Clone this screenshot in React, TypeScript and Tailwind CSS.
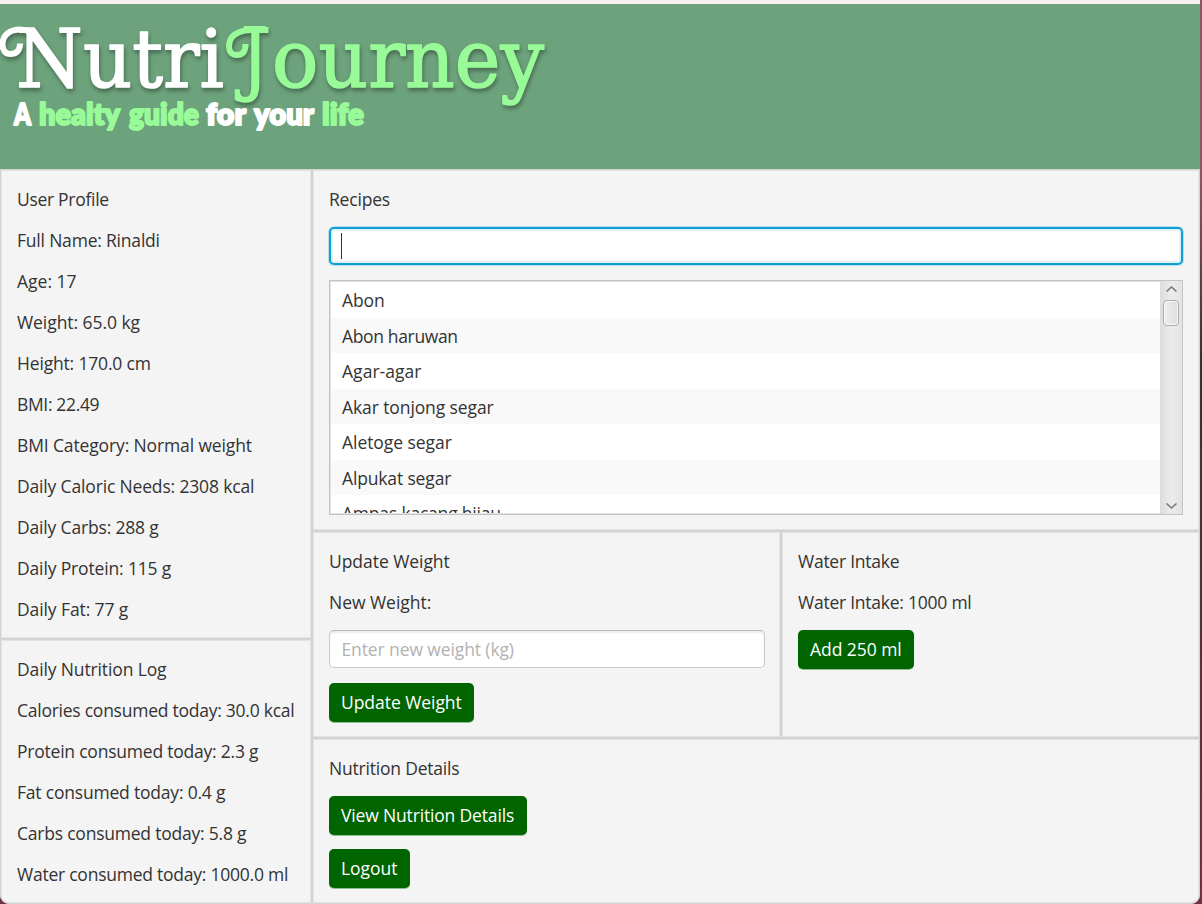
import type { ReactNode } from "react";

type Line = [text: string, tracking: string];

const profile: Line[] = [
  ["User Profile", "tracking-[-0.3px]"],
  ["Full Name: Rinaldi", "tracking-[-0.2px]"],
  ["Age: 17", "tracking-[0px]"],
  ["Weight: 65.0 kg", "tracking-[-0.06px]"],
  ["Height: 170.0 cm", "tracking-[-0.17px]"],
  ["BMI: 22.49", "tracking-[-0.35px]"],
  ["BMI Category: Normal weight", "tracking-[-0.13px]"],
  ["Daily Caloric Needs: 2308 kcal", "tracking-[-0.16px]"],
  ["Daily Carbs: 288 g", "tracking-[-0.17px]"],
  ["Daily Protein: 115 g", "tracking-[-0.15px]"],
  ["Daily Fat: 77 g", "tracking-[-0.1px]"],
];

const log: Line[] = [
  ["Daily Nutrition Log", "tracking-[-0.13px]"],
  ["Calories consumed today: 30.0 kcal", "tracking-[-0.25px]"],
  ["Protein consumed today: 2.3 g", "tracking-[-0.22px]"],
  ["Fat consumed today: 0.4 g", "tracking-[-0.2px]"],
  ["Carbs consumed today: 5.8 g", "tracking-[-0.22px]"],
  ["Water consumed today: 1000.0 ml", "tracking-[-0.24px]"],
];

const recipes: Line[] = [
  ["Abon", "tracking-[-0.1px]"],
  ["Abon haruwan", "tracking-[-0.35px]"],
  ["Agar-agar", "tracking-[0.03px]"],
  ["Akar tonjong segar", "tracking-[-0.1px]"],
  ["Aletoge segar", "tracking-[-0.05px]"],
  ["Alpukat segar", "tracking-[-0.15px]"],
  ["Ampas kacang hijau", "tracking-[-0.2px]"],
];

function Panel({ className, children }: { className: string; children: ReactNode }) {
  return (
    <section
      className={`flex flex-col items-start gap-[15px] border border-[#d3d3d3] px-4 pt-4 shadow-[inset_0_0_0_1px_#e4e4e4] ${className}`}
    >
      {children}
    </section>
  );
}

function Label({ line: [text, tracking] }: { line: Line }) {
  return <div className={`h-[26px] shrink-0 leading-[26px] whitespace-nowrap ${tracking}`}>{text}</div>;
}

function Button({ line: [text, tracking], className }: { line: Line; className: string }) {
  return (
    <button
      className={`h-[39px] shrink-0 rounded-[5px] bg-[#006400] pl-3 text-left leading-[39px] whitespace-nowrap text-white shadow-[0_1px_0_#93bd93] ${tracking} ${className}`}
    >
      {text}
    </button>
  );
}

function Logo() {
  return (
    <svg width="560" height="150" viewBox="0 0 560 150" className="block">
      <g
        className="[filter:drop-shadow(1px_3px_2px_rgba(0,0,0,0.35))]"
        fontFamily="'DejaVu Serif', serif"
        fontSize="81"
        strokeLinejoin="round"
      >
        <g fill="#fff" stroke="#fff" strokeWidth="1.600">
          <text x="16" y="82.500" textLength="208" lengthAdjust="spacingAndGlyphs">Nutri</text>
          <path d="M20 39.500C20 47 16 50 10.500 50C5 50 2.500 46 2.500 40.500C2.500 31 10 25.500 20 25.500C28 25.500 32 28 37 35" fill="none" strokeWidth="6" />
        </g>
        <g fill="#98fb98" stroke="#98fb98" strokeWidth="1.600">
          <text x="241" y="81" textLength="27" lengthAdjust="spacingAndGlyphs">J</text>
          <path d="M245.500 40C245.500 48 242 51 237 51C231 51 229 47 229 42.500C229 31 238 26.500 252 26H268.500" fill="none" strokeWidth="6" />
          <text x="272" y="82.500" textLength="272" lengthAdjust="spacingAndGlyphs">ourney</text>
        </g>
      </g>
      <g
        fontFamily="Lato, sans-serif"
        fontWeight="800"
        fontSize="31"
        strokeWidth="1.800"
        strokeLinejoin="round"
      >
        <g fill="#fff" stroke="#fff">
          <text x="14" y="121" textLength="17" lengthAdjust="spacingAndGlyphs">A</text>
          <text x="206" y="121" textLength="40" lengthAdjust="spacingAndGlyphs">for</text>
          <text x="254" y="121" textLength="60" lengthAdjust="spacingAndGlyphs">your</text>
        </g>
        <g fill="#98fb98" stroke="#98fb98">
          <text x="39" y="121" textLength="81" lengthAdjust="spacingAndGlyphs">healty</text>
          <text x="129" y="121" textLength="70" lengthAdjust="spacingAndGlyphs">guide</text>
          <text x="322" y="121" textLength="42" lengthAdjust="spacingAndGlyphs">life</text>
        </g>
      </g>
    </svg>
  );
}

function Scrollbar() {
  return (
    <div className="flex w-[22px] shrink-0 flex-col items-center justify-between bg-linear-to-r from-[#dcdcdc] via-[#ebebeb] to-[#e3e3e3]">
      <div className="flex flex-col items-center">
        <svg width="13" height="8" viewBox="0 0 13 8" className="mt-1">
          <path d="M1.500 6.500L6.500 2L11.500 6.500" fill="none" stroke="#777" strokeWidth="1.600" />
        </svg>
        <div className="mt-[7px] h-[26px] w-4 rounded-[4px] border border-[#adadad] bg-linear-to-r from-[#eeeeee] to-[#dedede] shadow-[inset_0_0_0_1px_#f8f8f8]" />
      </div>
      <svg width="13" height="8" viewBox="0 0 13 8" className="mb-1">
        <path d="M1.500 1.500L6.500 6L11.500 1.500" fill="none" stroke="#777" strokeWidth="1.600" />
      </svg>
    </div>
  );
}

export default function App() {
  return (
    <div className="flex h-[904px] w-[1202px] bg-linear-to-b from-[#8a5565] from-20% via-[#343232] via-40% to-[#6b3245] font-['Open_Sans','Noto_Sans',sans-serif] text-[17.5px] text-[#333]">
      <div className="flex w-[1200px] flex-col overflow-hidden rounded-b-[9px] bg-[#f4f4f4]">
        <div className="h-1 shrink-0 bg-[#f8f0ee]" />
        <header className="h-[165px] shrink-0 bg-[#6da37c]">
          <Logo />
        </header>
        <main className="flex min-h-0 flex-1">
          <div className="flex w-[312px] shrink-0 flex-col">
            <Panel className="h-[470px]">
              {profile.map((l) => (
                <Label key={l[0]} line={l} />
              ))}
            </Panel>
            <Panel className="h-[265px] rounded-bl-[9px]">
              {log.map((l) => (
                <Label key={l[0]} line={l} />
              ))}
            </Panel>
          </div>
          <div className="flex flex-1 flex-col">
            <Panel className="h-[362px]">
              <Label line={["Recipes", "tracking-[-0.2px]"]} />
              <div className="flex h-[38px] w-[854px] shrink-0 items-center rounded-[5px] border-2 border-[#0f9fd4] bg-white pl-[9.5px] shadow-[0_0_0_1px_#b5e0ee,inset_0_0_0_2px_#dff1f9]">
                <div className="h-[26px] w-[1.5px] bg-[#333]" />
              </div>
              <div className="flex h-[235px] w-[854px] shrink-0 border border-[#c4c4c4] bg-white shadow-[inset_0_0_0_1px_#e2e2e2]">
                <ul className="my-px ml-px flex-1 overflow-hidden">
                  {recipes.map(([text, tracking]) => (
                    <li
                      key={text}
                      className={`h-[35.5px] pl-[11px] leading-[37px] whitespace-nowrap even:bg-[#f9f9f9] ${tracking}`}
                    >
                      {text}
                    </li>
                  ))}
                </ul>
                <Scrollbar />
              </div>
            </Panel>
            <div className="flex h-[207px]">
              <Panel className="w-[469px]">
                <Label line={["Update Weight", "tracking-[-0.05px]"]} />
                <Label line={["New Weight:", "tracking-[-0.03px]"]} />
                <input
                  placeholder="Enter new weight (kg)"
                  className="h-[38px] w-[436px] shrink-0 rounded-[5px] border border-[#c8c8c8] border-t-[#b8b8b8] bg-white px-[11.5px] tracking-[-0.11px] shadow-[inset_0_2px_2px_#ececec] outline-none placeholder:text-[#b2b2b2]"
                />
                <Button line={["Update Weight", "tracking-[-0.05px]"]} className="w-[145px]" />
              </Panel>
              <Panel className="flex-1">
                <Label line={["Water Intake", "tracking-[-0.25px]"]} />
                <Label line={["Water Intake: 1000 ml", "tracking-[-0.24px]"]} />
                <Button line={["Add 250 ml", "tracking-[-0.05px]"]} className="w-[116px]" />
              </Panel>
            </div>
            <Panel className="flex-1 rounded-br-[9px]">
              <Label line={["Nutrition Details", "tracking-[-0.2px]"]} />
              <div className="flex flex-col items-start gap-[14px]">
                <Button line={["View Nutrition Details", "tracking-[-0.16px]"]} className="w-[198px]" />
                <Button line={["Logout", "tracking-[-0.05px]"]} className="w-[81px]" />
              </div>
            </Panel>
          </div>
        </main>
      </div>
    </div>
  );
}
